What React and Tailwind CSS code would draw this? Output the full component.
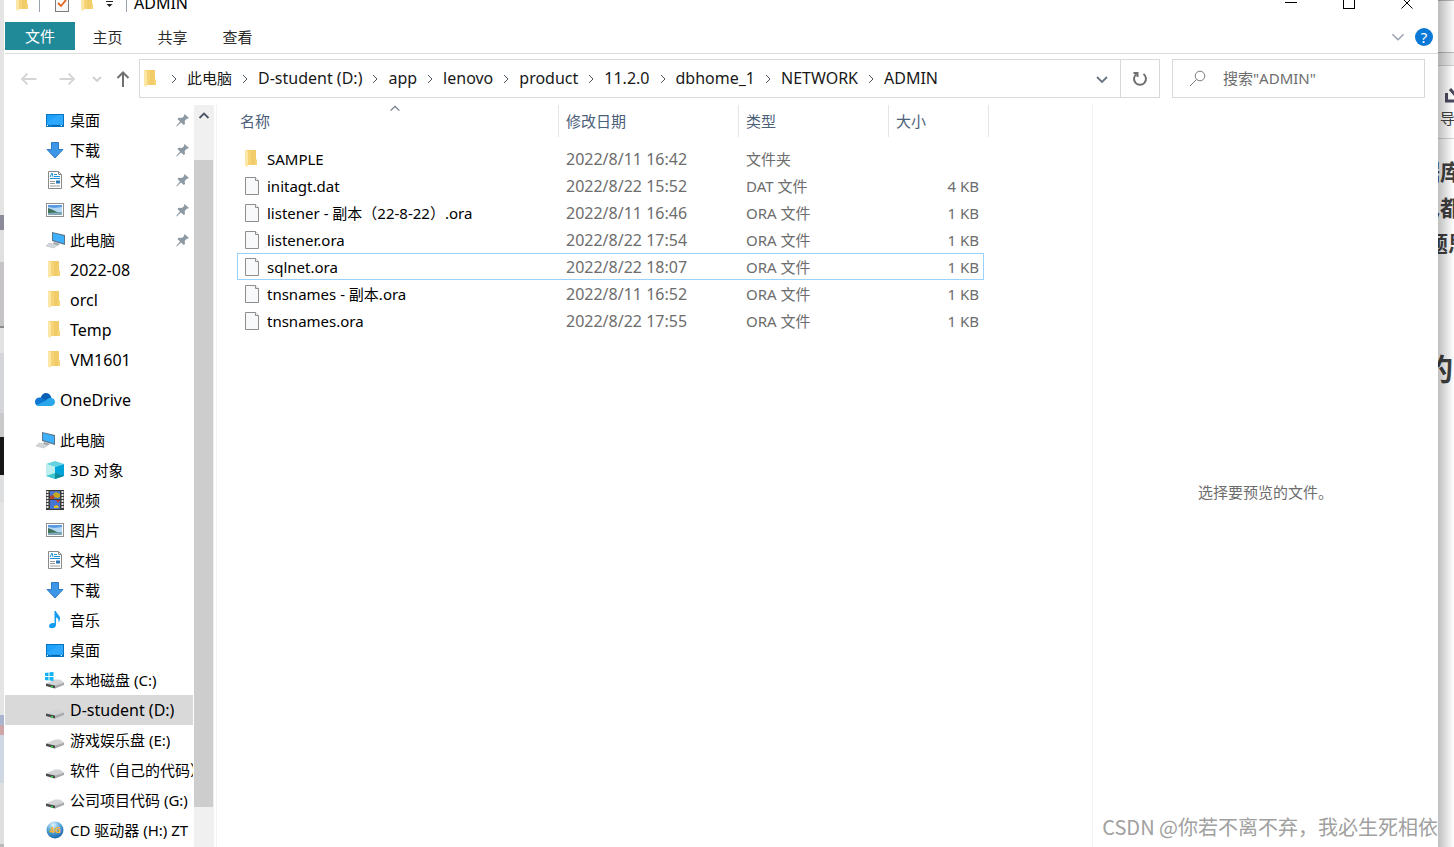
import { useState } from "react";

const crumbs = ["此电脑", "D-student (D:)", "app", "lenovo", "product", "11.2.0", "dbhome_1", "NETWORK", "ADMIN"];

const quickAccess = [
    { name: "桌面", icon: DesktopIcon, pinned: true },
    { name: "下载", icon: DownloadIcon, pinned: true },
    { name: "文档", icon: DocumentIcon, pinned: true },
    { name: "图片", icon: PictureIcon, pinned: true },
    { name: "此电脑", icon: ComputerIcon, pinned: true },
    { name: "2022-08", icon: FolderIcon },
    { name: "orcl", icon: FolderIcon },
    { name: "Temp", icon: FolderIcon },
    { name: "VM1601", icon: FolderIcon },
];

const thisPc = [
    { name: "3D 对象", icon: CubeIcon },
    { name: "视频", icon: VideoIcon },
    { name: "图片", icon: PictureIcon },
    { name: "文档", icon: DocumentIcon },
    { name: "下载", icon: DownloadIcon },
    { name: "音乐", icon: MusicIcon },
    { name: "桌面", icon: DesktopIcon },
    { name: "本地磁盘 (C:)", icon: SystemDriveIcon },
    { name: "D-student (D:)", icon: DriveIcon, selected: true },
    { name: "游戏娱乐盘 (E:)", icon: DriveIcon },
    { name: "软件（自己的代码）", icon: DriveIcon },
    { name: "公司项目代码 (G:)", icon: DriveIcon },
    { name: "CD 驱动器 (H:) ZT", icon: DiscIcon },
];

const files = [
    { name: "SAMPLE", date: "2022/8/11 16:42", type: "文件夹", size: "", folder: true },
    { name: "initagt.dat", date: "2022/8/22 15:52", type: "DAT 文件", size: "4 KB" },
    { name: "listener - 副本（22-8-22）.ora", date: "2022/8/11 16:46", type: "ORA 文件", size: "1 KB" },
    { name: "listener.ora", date: "2022/8/22 17:54", type: "ORA 文件", size: "1 KB" },
    { name: "sqlnet.ora", date: "2022/8/22 18:07", type: "ORA 文件", size: "1 KB" },
    { name: "tnsnames - 副本.ora", date: "2022/8/11 16:52", type: "ORA 文件", size: "1 KB" },
    { name: "tnsnames.ora", date: "2022/8/22 17:55", type: "ORA 文件", size: "1 KB" },
];

// latin-only labels are set one step larger than chinese ones
function labelSize(text) {
    return /^[ -~]+$/.test(text) ? "text-[16px]" : "text-[15px]";
}

function FolderIcon() {
    return (
        <svg width="20" height="20" viewBox="0 0 20 20">
            <path d="M4 1h10v9l1 1v5H5z" fill="#f6d475" />
            <path d="M9 1h5v9l-1 1v5H9z" fill="#efc75f" opacity=".6" />
            <path d="M3 1h1.500L6 3v14l-1 1-2-1.500z" fill="#fde7a6" />
        </svg>
    );
}

function FileIcon() {
    return (
        <svg width="14" height="18" viewBox="0 0 14 18">
            <path d="M.5.5h10l3 3v14H.5z" fill="#f8f9fa" stroke="#8e8e8e" />
            <path d="M10.500.5v3h3" fill="#fff" stroke="#8e8e8e" />
        </svg>
    );
}

function DesktopIcon() {
    return (
        <svg width="20" height="20" viewBox="0 0 20 20">
            <rect x="1.500" y="4.500" width="17" height="12" fill="#1ea1fb" stroke="#0873bf" />
            <path d="M2 13L13 5h5v9H2z" fill="#37adff" opacity=".6" />
            <path d="M3 15.500h2M6 15.500h9M17 15.500h1" stroke="#0b64a8" />
            <path d="M2 15.500h1M16 15.500h1" stroke="#fff" />
        </svg>
    );
}

function DownloadIcon() {
    return (
        <svg width="20" height="20" viewBox="0 0 20 20">
            <path d="M6.500 2.500h7v7h4.500L10 18 2 9.500h4.500z" fill="#3e97e6" stroke="#2b7cc7" />
        </svg>
    );
}

function DocumentIcon() {
    return (
        <svg width="20" height="20" viewBox="0 0 20 20">
            <path d="M3.500 1.500h10l3 3v14h-13z" fill="#fff" stroke="#8a8a8a" />
            <path d="M13.500 1.500v3h3" fill="none" stroke="#8a8a8a" />
            <path d="M5 7l2-4 1 4M9 4.500h3M9 6.500h6M5 8.500h10" fill="none" stroke="#1d8fdb" />
            <path d="M5 11.500h5M5 13.500h5M5 16h10" stroke="#9b9b9b" />
            <rect x="11" y="10.500" width="4" height="3" fill="#2f78b5" />
        </svg>
    );
}

function PictureIcon() {
    return (
        <svg width="20" height="20" viewBox="0 0 20 20">
            <rect x="1.500" y="3.500" width="17" height="13" fill="#fff" stroke="#8f8f8f" />
            <rect x="3" y="5" width="14" height="10" fill="#b5d8f5" />
            <path d="M3 5h14v2L9 8 3 7z" fill="#5b9be3" />
            <path d="M3 8l5 2 4 2 5 .5V13H3z" fill="#41705a" />
            <path d="M3 13l14-1v3H3z" fill="#7ea9b8" />
        </svg>
    );
}

function ComputerIcon() {
    return (
        <svg width="20" height="20" viewBox="0 0 20 20">
            <path d="M7 2l13 3v10L7 11z" fill="#5c7386" />
            <path d="M8 3l11 3v7.500L8 10z" fill="#3fb0fb" />
            <path d="M9 12l6 2-3 2-4-2z" fill="#9ba2a8" />
            <path d="M4 13l9 2-4 3-8-2z" fill="#d2d6d9" stroke="#b4b8bb" strokeWidth=".5" />
        </svg>
    );
}

function CubeIcon() {
    return (
        <svg width="20" height="20" viewBox="0 0 20 20">
            <path d="M10 1l9 3-9 3-9-3z" fill="#64d3e0" />
            <path d="M1 4l9 3v12l-9-3z" fill="#bdeef0" />
            <path d="M19 4l-9 3v12l9-3z" fill="#00a3d7" />
            <path d="M1 16l9-3v6z" fill="#3cc5cf" />
            <path d="M19 16l-9-3v6z" fill="#0f8c9c" />
        </svg>
    );
}

function VideoIcon() {
    return (
        <svg width="20" height="20" viewBox="0 0 20 20">
            <rect x="1" y="0" width="18" height="20" fill="#3b3b3b" />
            <path d="M2.500 1v18M17.500 1v18" stroke="#e8e8e8" strokeWidth="2" strokeDasharray="2 1" />
            <path d="M5 1h10v8H5zM5 10h10v9H5z" fill="#4775d1" />
            <path d="M8 4l3-2 4 2v3l-3 1-3-1z" fill="#c6a91c" />
            <path d="M5 6l3-1 2 3-2 1H5z" fill="#b7472f" />
            <path d="M11 10h4l-2 3z" fill="#c8391f" />
            <path d="M9 16l3-1 2 2-1 1H9z" fill="#e3c21d" />
        </svg>
    );
}

function MusicIcon() {
    return (
        <svg width="20" height="20" viewBox="0 0 20 20">
            <path d="M9.500 1H11c.5 3 4 4 4 7.500 0 1.500-.5 2.500-1.500 4 .5-3-.5-4.500-2.500-5V15c0 2-1.800 3.300-4 3.300-1.700 0-3-.8-3-2.200C4 14.300 6 13 8 13c.6 0 1 .1 1.500.3z" fill="#149cf2" />
        </svg>
    );
}

function DriveShape() {
    return (
        <>
            <path d="M1 13.500l9-4h5l4 3-9 3z" fill="#d3d4d6" />
            <path d="M1 13.500l9 2v3L1 16z" fill="#4a4b4d" />
            <path d="M10 15.500l9-3V15l-9 3.500z" fill="#a9abad" />
            <path d="M6 16.500l2 .5" stroke="#35d64b" strokeWidth="1.500" />
        </>
    );
}

function DriveIcon() {
    return (
        <svg width="20" height="20" viewBox="0 0 20 20">
            <DriveShape />
        </svg>
    );
}

function SystemDriveIcon() {
    return (
        <svg width="20" height="20" viewBox="0 0 20 20">
            <DriveShape />
            <path d="M0 3l3.500-.5V6H0zM4.500 2.300L8.500 2v4h-4zM0 7h3.500v3.500L0 10zM4.500 7h4v4l-4-.4z" fill="#12b3f0" />
        </svg>
    );
}

function DiscIcon() {
    return (
        <svg width="20" height="20" viewBox="0 0 20 20">
            <defs>
                <radialGradient id="disc" cx=".4" cy=".2" r=".8">
                    <stop offset="0" stopColor="#e2f3fd" />
                    <stop offset=".5" stopColor="#5aa9dd" />
                    <stop offset="1" stopColor="#1766ad" />
                </radialGradient>
            </defs>
            <circle cx="10" cy="10" r="8.500" fill="url(#disc)" />
            <text x="10" y="13" textAnchor="middle" fontSize="9" fontWeight="700" fill="#ffb52e">4G</text>
        </svg>
    );
}

function OneDriveIcon() {
    return (
        <svg width="20" height="20" viewBox="0 0 20 20">
            <path d="M5.500 8C6.300 5 8.500 3 11 3c2.600 0 4.700 1.600 5.400 5L10 13z" fill="#0a5fb4" />
            <path d="M1.500 15.200C.2 14 0 12.800 0 11.800 0 9.500 1.900 7.600 4.600 7.600c1.200 0 2 .3 3 .9l5 3.200-6 4z" fill="#0f78d4" />
            <path d="M11 10.500c1.200-2 2.800-2.800 4.800-2.800 2.500.1 4.200 2 4.200 4.100 0 2.500-1.700 4.200-4 4.200H4c-1 0-2-.3-2.500-.8z" fill="#28a8ea" />
        </svg>
    );
}

function PinIcon() {
    return (
        <svg width="14" height="14" viewBox="0 0 14 14" fill="#8c99a3">
            <path d="M8.500 1L13 5l-1.200.8-.8-.3-2.300 2.600.3 3-1.200 1L5 9.500.800 13.500l-.6-.5L4 8.600 1.500 6l1-1.200 3.200.3L8.300 3 8 2z" />
        </svg>
    );
}

function Chevron({ dir = "down", size = 10, className = "" }) {
    const paths = {
        down: "M1 3l4 4 4-4",
        up: "M1 7l4-4 4 4",
        right: "M3 1l4 4-4 4",
    };
    return (
        <svg width={size} height={size} viewBox="0 0 10 10" fill="none" stroke="currentColor" className={className}>
            <path d={paths[dir]} />
        </svg>
    );
}

function TitleBar() {
    return (
        <div className="-mt-4 flex h-[38px] shrink-0 items-center pr-0.5 pl-2">
            <FolderIcon />
            <span className="mr-[14px] ml-[6px] h-[18px] w-px bg-gray-400"></span>
            <button type="button" aria-label="属性" className="mr-2">
                <svg width="16" height="20" viewBox="0 0 16 20">
                    <rect x="1.500" y=".5" width="13" height="18" fill="#f7f8fa" stroke="#7d7d7d" />
                    <path d="M4 10l3 3 5-6" fill="none" stroke="#e8641b" strokeWidth="1.800" />
                </svg>
            </button>
            <FolderIcon />
            <button type="button" aria-label="自定义快速访问工具栏" className="mr-3 ml-2">
                <svg width="8" height="10" viewBox="0 0 8 10">
                    <path d="M0 3.500h7" stroke="#222" />
                    <path d="M.5 6h6l-3 3z" fill="#222" />
                </svg>
            </button>
            <span className="mr-[7px] h-[18px] w-px bg-gray-400"></span>
            <h1 className="flex-1 text-[16px] text-black">ADMIN</h1>
            <button type="button" aria-label="最小化" className="flex w-[58px] justify-center">
                <svg width="12" height="12" viewBox="0 0 12 12"><path d="M0 5.500h12" stroke="#000" /></svg>
            </button>
            <button type="button" aria-label="最大化" className="flex w-[58px] justify-center">
                <svg width="12" height="12" viewBox="0 0 12 12"><rect x=".5" y=".5" width="11" height="11" fill="none" stroke="#000" /></svg>
            </button>
            <button type="button" aria-label="关闭" className="flex w-[58px] justify-center">
                <svg width="12" height="12" viewBox="0 0 12 12"><path d="M.5.5l11 11M11.500.5l-11 11" stroke="#000" /></svg>
            </button>
        </div>
    );
}

function Ribbon() {
    return (
        <div className="flex h-8 shrink-0 items-start border-b border-[#dadbdc] pr-[5px]">
            <button type="button" className="h-7 w-[70px] bg-[#218a99] text-white">文件</button>
            {["主页", "共享", "查看"].map(tab => (
                <button key={tab} type="button" className="h-[30px] w-[65px] text-[#2b2b2b]">{tab}</button>
            ))}
            <div className="ml-auto flex h-[30px] items-center gap-2.5">
                <button type="button" aria-label="展开功能区"><Chevron size={14} className="text-gray-400" /></button>
                <button type="button" aria-label="帮助" className="h-[18px] w-[18px] rounded-full bg-[#0a78d6] text-[15px] leading-4 text-white">?</button>
            </div>
        </div>
    );
}

function AddressBar() {
    const [query, setQuery] = useState("");

    return (
        <div className="flex h-[51px] shrink-0 items-start pt-[5px] pr-[13px] pl-4">
            <div className="flex h-10 w-[118px] shrink-0 items-center">
                <button type="button" aria-label="后退" disabled>
                    <svg width="16" height="14" viewBox="0 0 16 14" fill="none" stroke="#d5d5d5" strokeWidth="1.800"><path d="M15.500 7H1M6.500 1.500L1 7l5.500 5.500" /></svg>
                </button>
                <button type="button" aria-label="前进" className="ml-[22px]" disabled>
                    <svg width="16" height="14" viewBox="0 0 16 14" fill="none" stroke="#d5d5d5" strokeWidth="1.800"><path d="M.5 7H15M9.500 1.500L15 7l-5.500 5.500" /></svg>
                </button>
                <button type="button" aria-label="最近浏览的位置" className="ml-[17px]">
                    <svg width="10" height="10" viewBox="0 0 10 10" fill="none" stroke="#cfcfcf" strokeWidth="1.800"><path d="M1 3l4 4 4-4" /></svg>
                </button>
                <button type="button" aria-label="上移" className="ml-[14px]">
                    <svg width="14" height="16" viewBox="0 0 14 16" fill="none" stroke="#707070" strokeWidth="2"><path d="M7 16V2M1.500 7L7 1.500 12.500 7" /></svg>
                </button>
            </div>
            <nav aria-label="地址" className="flex h-[39px] min-w-0 flex-1 items-center border border-[#d9d9d9] pl-px text-[#191919]">
                <FolderIcon />
                {crumbs.map(crumb => (
                    <span key={crumb} className="flex items-center pb-0.5">
                        <span className="flex w-[26px] justify-center pt-0.5 text-gray-600"><Chevron dir="right" size={10} /></span>
                        <a href="#" className={`whitespace-nowrap ${labelSize(crumb)}`}>{crumb}</a>
                    </span>
                ))}
                <button type="button" aria-label="以前的位置" className="ml-auto flex h-full w-9 items-center justify-center text-gray-500">
                    <svg width="12" height="12" viewBox="0 0 12 12" fill="none" stroke="currentColor" strokeWidth="1.800"><path d="M1 4l5 5 5-5" /></svg>
                </button>
                <button type="button" aria-label="刷新" className="flex h-full w-[39px] items-center justify-center border-l border-[#d9d9d9]">
                    <svg width="16" height="16" viewBox="0 0 16 16" fill="none" stroke="#707070" strokeWidth="2">
                        <path d="M11.500 3A6 6 0 1 1 4.500 3" />
                        <path d="M1.500 2h4v4" />
                    </svg>
                </button>
            </nav>
            <label className="ml-3 flex h-[39px] w-[253px] shrink-0 items-center border border-[#d9d9d9] pl-4">
                <svg width="17" height="17" viewBox="0 0 17 17" fill="none" stroke="#7d7d7d">
                    <circle cx="11" cy="6" r="4.800" />
                    <path d="M7.500 9.500L1 16" />
                </svg>
                <input
                    type="search"
                    aria-label="搜索"
                    placeholder={'搜索"ADMIN"'}
                    value={query}
                    onChange={(e) => setQuery(e.target.value)}
                    className="ml-[17px] min-w-0 flex-1 pb-0.5 outline-none placeholder:text-[#6d6d6d]"
                />
            </label>
        </div>
    );
}

function TreeItem({ item, root }) {
    const Icon = item.icon;
    return (
        <li>
            <a
                href="#"
                className={`flex h-[30px] items-center whitespace-nowrap text-black ${root ? "pl-[30px]" : "pl-10"} ${labelSize(item.name)} ${item.selected ? "bg-[#d9d9d9]" : ""}`}
            >
                <span className="mr-[5px] shrink-0"><Icon /></span>
                {item.name}
                {item.pinned && <span className="mr-[3px] ml-auto"><PinIcon /></span>}
            </a>
        </li>
    );
}

function Sidebar() {
    return (
        <aside className="flex w-[212px] shrink-0 border-r border-[#f3f3f3]">
            <nav aria-label="导航窗格" className="flex w-[188px] flex-col gap-2.5 overflow-hidden">
                <ul>
                    {quickAccess.map(item => <TreeItem key={item.name} item={item} />)}
                </ul>
                <ul>
                    <TreeItem item={{ name: "OneDrive", icon: OneDriveIcon }} root />
                </ul>
                <ul>
                    <TreeItem item={{ name: "此电脑", icon: ComputerIcon }} root />
                    {thisPc.map(item => <TreeItem key={item.name} item={item} />)}
                </ul>
            </nav>
            <div className="ml-px flex w-5 flex-col bg-[#f0f0f0] pb-10">
                <button type="button" aria-label="向上滚动" className="flex h-[55px] shrink-0 justify-center pt-1 text-gray-600">
                    <svg width="12" height="12" viewBox="0 0 12 12" fill="none" stroke="currentColor" strokeWidth="1.800"><path d="M1.500 9L6 4.500 10.500 9" /></svg>
                </button>
                <div className="w-[19px] flex-1 bg-[#cdcdcd]"></div>
            </div>
        </aside>
    );
}

function FileTable() {
    const [current, setCurrent] = useState("sqlnet.ora");

    return (
        <table className="w-[757px] table-fixed border-separate border-spacing-0 text-left">
            <colgroup>
                <col className="w-[5px]" />
                <col className="w-[322px]" />
                <col className="w-[180px]" />
                <col className="w-[150px]" />
                <col className="w-[95px]" />
                <col className="w-[5px]" />
            </colgroup>
            <thead>
                <tr className="h-8 text-[#4c607a]">
                    <th colSpan={2} className="relative border-r border-[#e5e5e5] pl-2 font-normal">
                        名称
                        <Chevron dir="up" size={11} className="absolute -top-0.5 left-1/2 -translate-x-1/2 text-gray-500" />
                    </th>
                    <th className="border-r border-[#e5e5e5] pl-[7px] font-normal">修改日期</th>
                    <th className="border-r border-[#e5e5e5] pl-[7px] font-normal">类型</th>
                    <th colSpan={2} className="border-r border-[#e5e5e5] pl-[7px] font-normal">大小</th>
                </tr>
            </thead>
            <tbody className="text-[#6d6d6d]">
                <tr className="h-2"><td colSpan={6}></td></tr>
                {files.map(file => {
                    const edge = file.name === current ? "border-[#99d1ff]" : "border-transparent";
                    return (
                        <tr key={file.name} className="h-[27px]" onClick={() => setCurrent(file.name)}>
                            <td></td>
                            <td className={`border-y border-l text-black ${edge}`}>
                                <span className="flex items-center">
                                    <span className={file.folder ? "mr-[5px] ml-1" : "mr-2 ml-[7px]"}>
                                        {file.folder ? <FolderIcon /> : <FileIcon />}
                                    </span>
                                    {file.name}
                                </span>
                            </td>
                            <td className={`border-y pl-[7px] text-[16px] ${edge}`}>{file.date}</td>
                            <td className={`border-y pl-[7px] ${edge}`}>{file.type}</td>
                            <td className={`border-y border-r pr-1 text-right ${edge}`}>{file.size}</td>
                            <td></td>
                        </tr>
                    );
                })}
            </tbody>
        </table>
    );
}

// slivers of the windows lying behind this one
const leftBands = [
    "h-[215px] bg-[#e4e4e4]",
    "h-[15px] bg-[#8a8a98]",
    "h-[32px] bg-[#e0e0e0]",
    "h-[64px] bg-[#c5c3c5]",
    "h-[2px] bg-[#8a8a8a]",
    "h-[25px] bg-[#e2e2e2]",
    "h-[60px] bg-[#d3d5d9]",
    "h-[24px] bg-[#c9c9c9]",
    "h-[38px] bg-[#161616]",
    "h-[28px] bg-[#dcdee0]",
    "h-[212px] bg-[#e4e4e4]",
    "h-[10px] bg-[#a9b4cf]",
    "h-[10px] bg-[#d0a5a8]",
    "h-[48px] bg-[#cfd7e2]",
    "h-[61px] bg-[#dfdfdf]",
];

function LeftBackdrop() {
    return (
        <div className="w-1 shrink-0 overflow-hidden bg-[#b9b9b9]">
            {leftBands.map((band, i) => <div key={i} className={band}></div>)}
        </div>
    );
}

function RightBackdrop() {
    return (
        <div className="relative w-4 shrink-0 overflow-hidden bg-white text-[#404040]">
            <div className="h-[53px] border-y border-[#b9b9b9] bg-[#fafafa]"></div>
            <div className="h-[13px] border-b border-[#cfcfcf] bg-[#ededed]"></div>
            <div className="flex h-[73px] flex-col border-b border-[#d5d5d5] pt-[20px] pl-[7px]">
                <svg width="20" height="18" viewBox="0 0 20 18" fill="none" stroke="#4a4a5e" strokeWidth="3">
                    <path d="M1.500 7v8h16M5 3l6 7" />
                </svg>
                <span className="-ml-[5px] flex h-7 items-center">导</span>
            </div>
            <div className="pt-[14px] text-[22px] leading-9 font-bold whitespace-nowrap">
                <p className="-ml-5">据库</p>
                <p className="-ml-5">也都</p>
                <p className="-ml-3">题思</p>
            </div>
            <p className="mt-[84px] -ml-[15px] text-[30px] leading-[48px] font-bold">的</p>
            <div className="absolute inset-0 bg-gradient-to-r from-black/25 to-black/0"></div>
        </div>
    );
}

export default function App() {
    return (
        <div className="relative flex h-screen overflow-hidden bg-white font-['Noto_Sans','Noto_Sans_CJK_SC',sans-serif] text-[15px] leading-[22px]">
            <LeftBackdrop />
            <main className="flex min-w-0 flex-1 flex-col bg-white pl-px">
                <TitleBar />
                <Ribbon />
                <AddressBar />
                <div className="flex min-h-0 flex-1">
                    <Sidebar />
                    <section className="min-w-0 flex-1 overflow-hidden pl-[15px]">
                        <FileTable />
                    </section>
                    <section className="flex w-[346px] shrink-0 items-center justify-center border-l border-[#f3f3f3] pt-8 text-[#6d6d6d]">
                        选择要预览的文件。
                    </section>
                </div>
            </main>
            <RightBackdrop />
            <p className="absolute right-4 bottom-1.5 font-['Noto_Sans_CJK_SC',sans-serif] text-[20px] leading-7 whitespace-nowrap text-[#a0a0a0]">
                CSDN @你若不离不弃，我必生死相依
            </p>
        </div>
    );
}
